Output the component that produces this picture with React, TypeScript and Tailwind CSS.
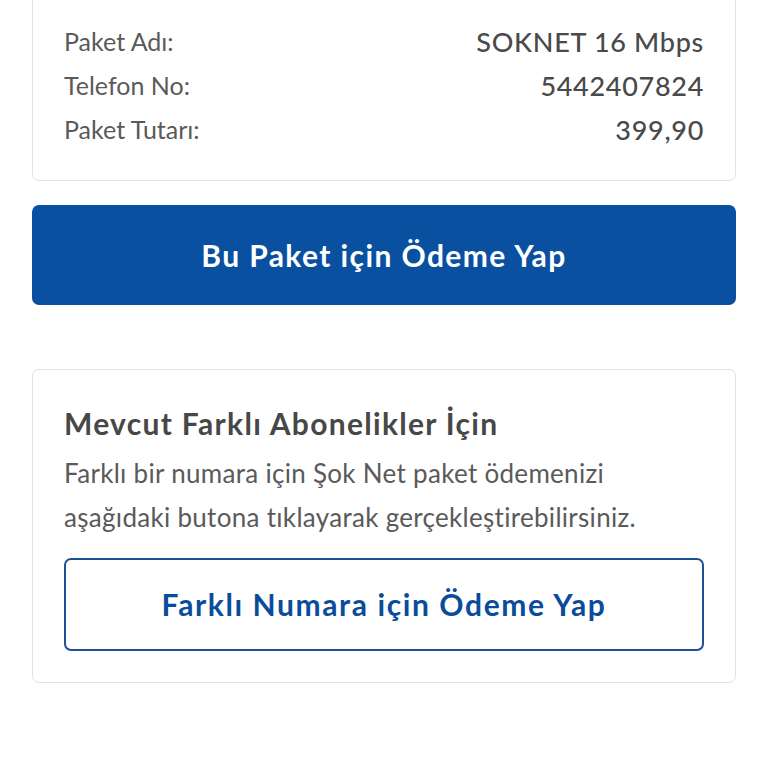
const font = { fontFamily: "Lato, 'Open Sans', sans-serif" };

function Row({ label, value }: { label: string; value: string }) {
  return (
    <div className="flex items-center justify-between h-[44px]">
      <span className="text-[25px] text-[#5a5a5a]">{label}</span>
      <span className="text-[27px] tracking-[0.7px] font-medium text-[#4a4a4a]">{value}</span>
    </div>
  );
}

export default function App() {
  return (
    <div className="min-h-[768px] bg-white overflow-hidden" style={font}>
      <div className="px-8">
        {/* Package summary */}
        <section className="-mt-[12px] border border-[#e2e2e2] rounded-[7px] pt-[31px] pb-[28px] px-[31px] bg-white">
          <Row label="Paket Adı:" value="SOKNET 16 Mbps" />
          <Row label="Telefon No:" value="5442407824" />
          <Row label="Paket Tutarı:" value="399,90" />
        </section>

        <button className="mt-[24px] w-full h-[100px] rounded-[7px] bg-[#0a50a1] text-white text-[30px] tracking-[1.4px] font-bold">
          Bu Paket için Ödeme Yap
        </button>

        {/* Other subscriptions */}
        <section className="mt-[64px] border border-[#e2e2e2] rounded-[7px] pt-[31px] pb-[31px] px-[31px] bg-white">
          <h2 className="h-[44px] flex items-center text-[30px] tracking-[1.3px] font-bold text-[#474747]">
            Mevcut Farklı Abonelikler İçin
          </h2>
          <p className="mt-[6px] text-[26px] tracking-[0.3px] leading-[44px] text-[#5a5a5a]">
            Farklı bir numara için Şok Net paket ödemenizi
            <br />
            aşağıdaki butona tıklayarak gerçekleştirebilirsiniz.
          </p>
          <button className="mt-[19px] w-full h-[93px] rounded-[7px] border-2 border-[#1c5199] bg-white text-[#0a4c9c] text-[30px] tracking-[1.6px] font-bold">
            Farklı Numara için Ödeme Yap
          </button>
        </section>
      </div>
    </div>
  );
}
